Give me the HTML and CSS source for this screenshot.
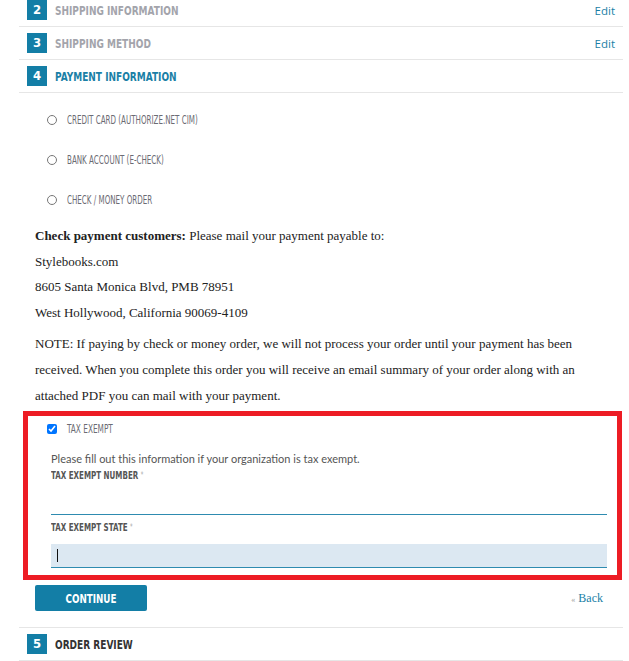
FILE: index.html
```html
<!DOCTYPE html>
<html lang="en">
<head>
  <meta charset="UTF-8">
  <title>Checkout</title>
  <link rel="stylesheet" href="styles.css">
</head>
<body>
  <div class="checkout">
    <div class="step done">
      <span class="num">2</span>
      <span class="step-title"><span>Shipping Information</span></span>
      <a class="edit" href="#">Edit</a>
    </div>
    <div class="step done">
      <span class="num">3</span>
      <span class="step-title"><span>Shipping Method</span></span>
      <a class="edit" href="#">Edit</a>
    </div>
    <div class="step active">
      <span class="num">4</span>
      <span class="step-title"><span>Payment Information</span></span>
    </div>

    <div class="step-body">
      <ul class="methods">
        <li><label><input type="radio" name="payment"><span>Credit Card (Authorize.net CIM)</span></label></li>
        <li><label><input type="radio" name="payment"><span>Bank Account (E-Check)</span></label></li>
        <li><label><input type="radio" name="payment"><span>Check / Money Order</span></label></li>
      </ul>

      <p class="note"><strong>Check payment customers:</strong> Please mail your payment payable to:<br>
        Stylebooks.com<br>
        8605 Santa Monica Blvd, PMB 78951<br>
        West Hollywood, California 90069-4109</p>
      <p class="note second">NOTE: If paying by check or money order, we will not process your order until your payment has been received. When you complete this order you will receive an email summary of your order along with an attached PDF you can mail with your payment.</p>

      <div class="tax-box">
        <label class="tax-check"><input type="checkbox" checked><span>Tax Exempt</span></label>
        <p class="tax-hint">Please fill out this information if your organization is tax exempt.</p>
        <label class="field-label"><span>Tax Exempt Number <em>*</em></span></label>
        <input class="field" type="text">
        <label class="field-label second"><span>Tax Exempt State <em>*</em></span></label>
        <div class="field focused"><span class="caret"></span></div>
      </div>

      <div class="actions">
        <button class="continue"><span>Continue</span></button>
        <a class="back" href="#"><small>&laquo;</small> Back</a>
      </div>
    </div>

    <div class="step">
      <span class="num">5</span>
      <span class="step-title"><span>Order Review</span></span>
    </div>
  </div>
</body>
</html>
```

FILE: styles.css
```css
body {
  margin: 0;
  background: #fff;
  font-family: 'Open Sans', sans-serif;
}
.checkout {
  margin: -6px 0 0 19px;
  width: 604px;
}
/* condensed headings: DejaVu Sans Condensed squeezed to DIN-like width */
.step-title span,
.methods label span,
.tax-check span,
.field-label span,
.continue span {
  display: inline-block;
  white-space: nowrap;
  transform-origin: left center;
}
.step {
  display: flex;
  align-items: center;
  height: 32px;
  padding: 0 8px;
  border-bottom: 1px solid #e6e6e6;
}
.num {
  width: 20px;
  height: 20px;
  background: #137ea6;
  color: #fff;
  font-family: 'DejaVu Sans Condensed', sans-serif;
  font-weight: bold;
  font-size: 13px;
  line-height: 20px;
  text-align: center;
  margin-right: 8px;
}
.step-title {
  flex: 1;
  font-family: 'DejaVu Sans Condensed', sans-serif;
  font-weight: bold;
  font-size: 13px;
  text-transform: uppercase;
  color: #333;
}
.step-title span {
  transform: scaleX(0.77);
}
.done .step-title {
  color: #a3a4ab;
}
.active .step-title {
  color: #1a7fa6;
}
.edit {
  font-size: 11.5px;
  color: #1a7fa6;
  text-decoration: none;
}
.step-body {
  padding: 7px 0 16px 16px;
  border-bottom: 1px solid #e6e6e6;
}
.methods {
  list-style: none;
  margin: 0;
  padding: 0 0 0 12px;
}
.methods li {
  height: 40px;
  display: flex;
  align-items: center;
}
.methods label,
.tax-check {
  display: flex;
  align-items: center;
  font-family: 'DejaVu Sans Condensed', sans-serif;
  font-size: 11.5px;
  text-transform: uppercase;
  color: #6b6b73;
}
.methods label span {
  transform: scaleX(0.69);
}
.methods input {
  width: 10px;
  height: 10px;
  margin: 0 10px 0 0;
}
.note {
  margin: 3px 0 0;
  padding-right: 20px;
  font-family: 'Liberation Serif', serif;
  font-size: 13px;
  line-height: 25.6px;
  color: #222;
}
.note.second {
  margin-top: 6px;
}
.tax-box {
  margin: 3px 1px 0 -12px;
  border: 5px solid #ed1c24;
  padding: 0 10px 7px 23px;
}
.tax-check {
  height: 26px;
  margin-left: -4px;
}
.tax-check span {
  transform: scaleX(0.71);
}
.tax-check input {
  width: 10px;
  height: 10px;
  margin: 0 10px 0 0;
}
.tax-hint {
  margin: 9px 0 0;
  font-family: Lato, sans-serif;
  font-size: 11px;
  line-height: 16px;
  color: #555;
}
.field-label {
  display: block;
  margin-top: 1px;
  font-family: 'DejaVu Sans Condensed', sans-serif;
  font-weight: bold;
  font-size: 11px;
  line-height: 16px;
  text-transform: uppercase;
  color: #555;
}
.field-label span {
  transform: scaleX(0.72);
}
.field-label.second {
  margin-top: 5px;
}
.field-label em {
  font-style: normal;
  font-weight: normal;
  font-size: 8px;
  vertical-align: top;
  color: #aaa;
}
.field {
  display: block;
  box-sizing: border-box;
  width: 100%;
  height: 24px;
  margin: 7px 0 0;
  padding: 0 6px;
  border: none;
  border-bottom: 1px solid #2e8bb0;
  background: transparent;
}
.field.focused {
  margin-top: 8px;
  background: #dce8f2;
  display: flex;
  align-items: center;
}
.caret {
  width: 1px;
  height: 13px;
  background: #111;
}
.actions {
  display: flex;
  justify-content: space-between;
  align-items: center;
  margin-top: 5px;
  padding-right: 20px;
}
.continue {
  width: 112px;
  height: 26px;
  border: none;
  border-radius: 2px;
  background: #137ea6;
  color: #fff;
  font-family: 'DejaVu Sans Condensed', sans-serif;
  font-weight: bold;
  font-size: 13px;
  text-transform: uppercase;
}
.continue span {
  transform: scaleX(0.75);
  transform-origin: center;
}
.back {
  font-family: 'Liberation Serif', serif;
  font-size: 12px;
  color: #1a7fa6;
  text-decoration: none;
}
.back small {
  font-size: 8px;
  color: #999;
}
```
